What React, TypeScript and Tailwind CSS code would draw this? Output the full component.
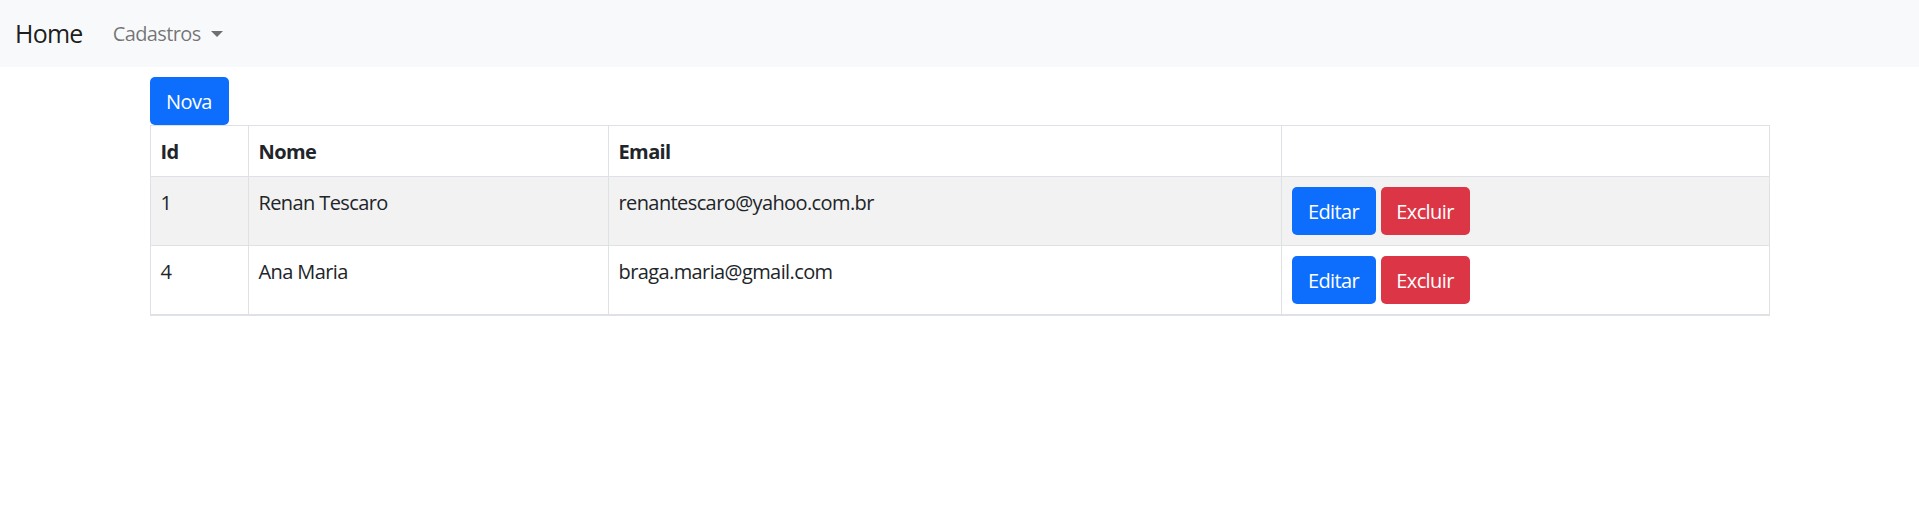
import React from "react";

const rows = [
  { id: 1, nome: "Renan Tescaro", email: "renantescaro@yahoo.com.br", striped: true },
  { id: 4, nome: "Ana Maria", email: "braga.maria@gmail.com", striped: false },
];

const cell = "border border-[#dee2e6] px-[10px] pt-[11px] pb-[9px] text-left align-top";

export default function App() {
  return (
    <div
      className="min-h-[517px] bg-white text-[#212529] text-[20px] leading-[30px] tracking-[-0.6px]"
      style={{ fontFamily: '"Segoe UI", "Open Sans", "Noto Sans", sans-serif' }}
    >
      <nav className="h-[67px] bg-[#f8f9fa] flex items-center px-[15px]">
        <a className="text-[25px] leading-[37px] tracking-[-0.75px] text-[#000000e6] mr-[20px] pb-[1px]">Home</a>
        <div className="flex items-center px-[10px] text-[#0000008c] text-[20px]">
          <span>Cadastros</span>
          <span className="ml-[10px] mt-[1px] w-0 h-0 border-t-[6px] border-t-[#0000008c] border-x-[6px] border-x-transparent" />
        </div>
      </nav>
      <main className="mx-auto w-full max-w-[1650px] px-[15px] pt-[10px]">
        <button className="h-[48px] w-[79px] pt-[2px] text-center bg-[#0d6efd] text-white text-[20px] rounded-[5px]">
          Nova
        </button>
        <table className="w-full table-fixed border-collapse border border-[#dee2e6]">
          <colgroup>
            <col className="w-[98px]" />
            <col className="w-[360px]" />
            <col className="w-[673px]" />
            <col />
          </colgroup>
          <thead>
            <tr>
              <th className={`${cell} font-bold`}>Id</th>
              <th className={`${cell} font-bold`}>Nome</th>
              <th className={`${cell} font-bold`}>Email</th>
              <th className={`${cell} font-bold`}></th>
            </tr>
          </thead>
          <tbody>
            {rows.map((r, i) => (
              <tr
                key={r.id}
                className={`${r.striped ? "bg-[#f2f2f2]" : "bg-white"} ${i === rows.length - 1 ? "border-b-2 border-b-[#dee2e6]" : ""}`}
              >
                <td className={cell}>{r.id}</td>
                <td className={cell}>{r.nome}</td>
                <td className={cell}>{r.email}</td>
                <td className="border border-[#dee2e6] p-[10px] align-top">
                  <div className="flex gap-[5px]">
                    <button className="h-[48px] w-[84px] pt-[2px] text-center bg-[#0d6efd] text-white text-[20px] rounded-[5px]">
                      Editar
                    </button>
                    <button className="h-[48px] w-[89px] pt-[2px] text-center bg-[#dc3545] text-white text-[20px] rounded-[5px]">
                      Excluir
                    </button>
                  </div>
                </td>
              </tr>
            ))}
          </tbody>
        </table>
      </main>
    </div>
  );
}
